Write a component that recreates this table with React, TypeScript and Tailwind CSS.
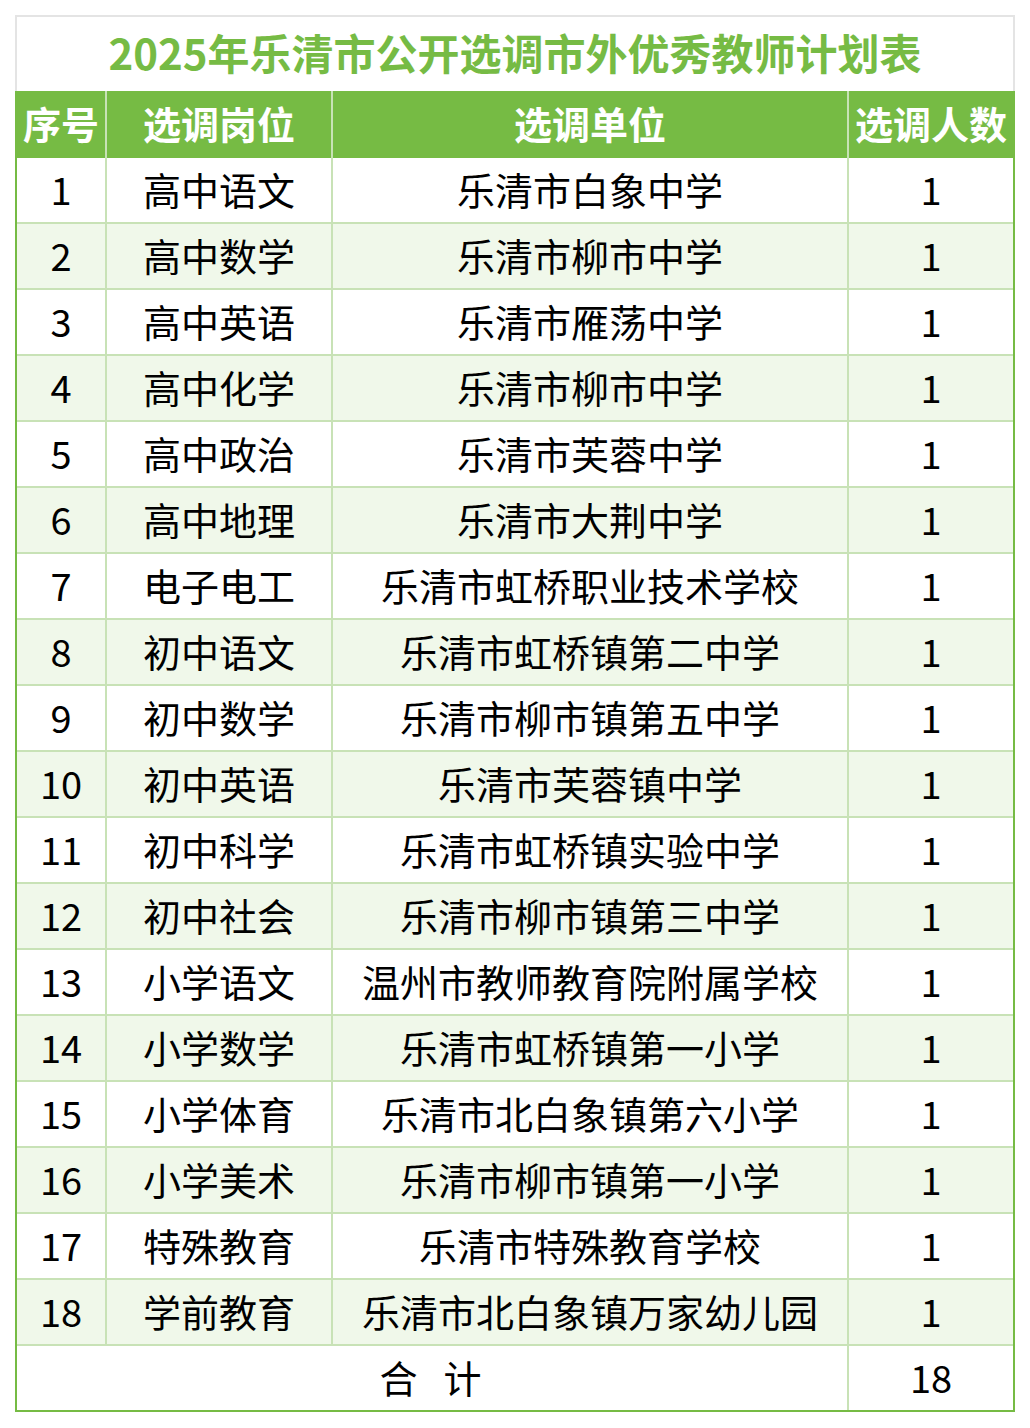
import React from "react";

const rows: [string, string][] = [
  ["高中语文", "乐清市白象中学"],
  ["高中数学", "乐清市柳市中学"],
  ["高中英语", "乐清市雁荡中学"],
  ["高中化学", "乐清市柳市中学"],
  ["高中政治", "乐清市芙蓉中学"],
  ["高中地理", "乐清市大荆中学"],
  ["电子电工", "乐清市虹桥职业技术学校"],
  ["初中语文", "乐清市虹桥镇第二中学"],
  ["初中数学", "乐清市柳市镇第五中学"],
  ["初中英语", "乐清市芙蓉镇中学"],
  ["初中科学", "乐清市虹桥镇实验中学"],
  ["初中社会", "乐清市柳市镇第三中学"],
  ["小学语文", "温州市教师教育院附属学校"],
  ["小学数学", "乐清市虹桥镇第一小学"],
  ["小学体育", "乐清市北白象镇第六小学"],
  ["小学美术", "乐清市柳市镇第一小学"],
  ["特殊教育", "乐清市特殊教育学校"],
  ["学前教育", "乐清市北白象镇万家幼儿园"],
];

const font = {
  fontFamily: '"Noto Sans CJK SC", "Noto Sans", sans-serif',
};

const cell = "flex items-center justify-center pb-[4px]";

export default function App() {
  return (
    <div className="min-h-screen bg-white pt-[15px] pl-[15px]" style={font}>
      <div className="w-[1000px]">
        {/* Title */}
        <div className="h-[76px] border-2 border-b-0 border-[#e4e4e4] flex items-center justify-center pb-[5px]">
          <span className="text-[42px] font-bold text-[#76bb44] leading-none">
            2025年乐清市公开选调市外优秀教师计划表
          </span>
        </div>

        <div className="border-2 border-t-0 border-[#76bb44]">
          {/* Header */}
          <div className="grid grid-cols-[90px_226px_516px_164px] h-[67px] bg-[#76bb44] text-white font-bold text-[38px]">
            <div className={`${cell} border-r-2 border-[#c8e2b6]`}>序号</div>
            <div className={`${cell} border-r-2 border-[#c8e2b6]`}>选调岗位</div>
            <div className={`${cell} border-r-2 border-[#c8e2b6]`}>选调单位</div>
            <div className={cell}>选调人数</div>
          </div>

          {rows.map(([post, unit], i) => (
            <div
              key={i}
              className={`grid grid-cols-[90px_226px_516px_164px] h-[66px] border-b-2 border-[#c8e2b6] text-black text-[38px] ${
                i % 2 === 1 ? "bg-[#f0f8ea]" : "bg-white"
              }`}
            >
              <div className={`${cell} border-r-2 border-[#c8e2b6]`}>{i + 1}</div>
              <div className={`${cell} border-r-2 border-[#c8e2b6]`}>{post}</div>
              <div className={`${cell} border-r-2 border-[#c8e2b6]`}>{unit}</div>
              <div className={cell}>1</div>
            </div>
          ))}

          {/* Total */}
          <div className="grid grid-cols-[832px_164px] h-[64px] bg-white text-black text-[38px]">
            <div className={`${cell} border-r-2 border-[#c8e2b6] whitespace-pre tracking-[3px]`}>合  计</div>
            <div className={cell}>18</div>
          </div>
        </div>
      </div>
    </div>
  );
}
